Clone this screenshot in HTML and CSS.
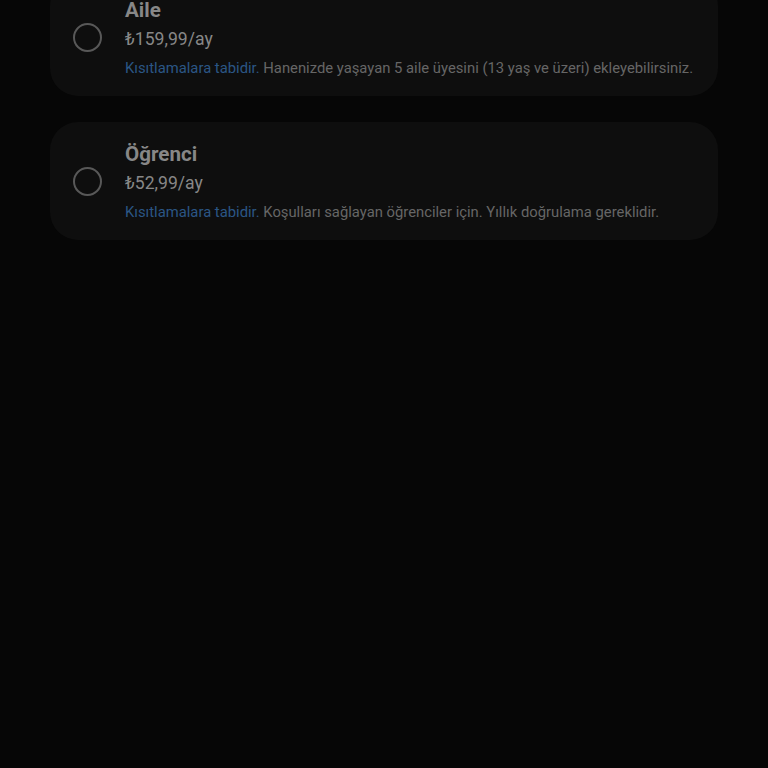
FILE: index.html
```html
<!DOCTYPE html>
<html lang="tr">
<head>
<meta charset="utf-8">
<link rel="stylesheet" href="styles.css">
</head>
<body>
<div class="list">
  <div class="card">
    <span class="radio"></span>
    <div class="info">
      <div class="title">Aile</div>
      <div class="price">₺159,99/ay</div>
      <div class="desc"><span class="link">Kısıtlamalara tabidir.</span> Hanenizde yaşayan 5 aile üyesini (13 yaş ve üzeri) ekleyebilirsiniz.</div>
    </div>
  </div>
  <div class="card">
    <span class="radio"></span>
    <div class="info">
      <div class="title">Öğrenci</div>
      <div class="price">₺52,99/ay</div>
      <div class="desc"><span class="link">Kısıtlamalara tabidir.</span> Koşulları sağlayan öğrenciler için. Yıllık doğrulama gereklidir.</div>
    </div>
  </div>
</div>
</body>
</html>
```
FILE: styles.css
```css
html, body {
  margin: 0;
  height: 100%;
  background: #060606;
}
body {
  font-family: Roboto, "Noto Sans", sans-serif;
  overflow: hidden;
}
.list {
  display: flex;
  flex-direction: column;
  gap: 26px;
  padding: 0 50px;
  margin-top: -22px;
}
.card {
  background: #0e0e0e;
  border-radius: 28px;
  padding: 18px 20px 13px 23px;
  display: flex;
  align-items: center;
  gap: 23px;
}
.radio {
  flex: none;
  width: 25px;
  height: 25px;
  border: 2.5px solid #585858;
  border-radius: 50%;
  margin-top: -5px;
}
.info {
  display: flex;
  flex-direction: column;
}
.title {
  font-size: 20.6px;
  font-weight: 700;
  line-height: 29px;
  color: #878787;
}
.price {
  font-size: 17.6px;
  line-height: 29px;
  color: #878787;
}
.desc {
  font-size: 14.8px;
  line-height: 29px;
  color: #666666;
  white-space: nowrap;
}
.link {
  color: #2b5685;
}
```
